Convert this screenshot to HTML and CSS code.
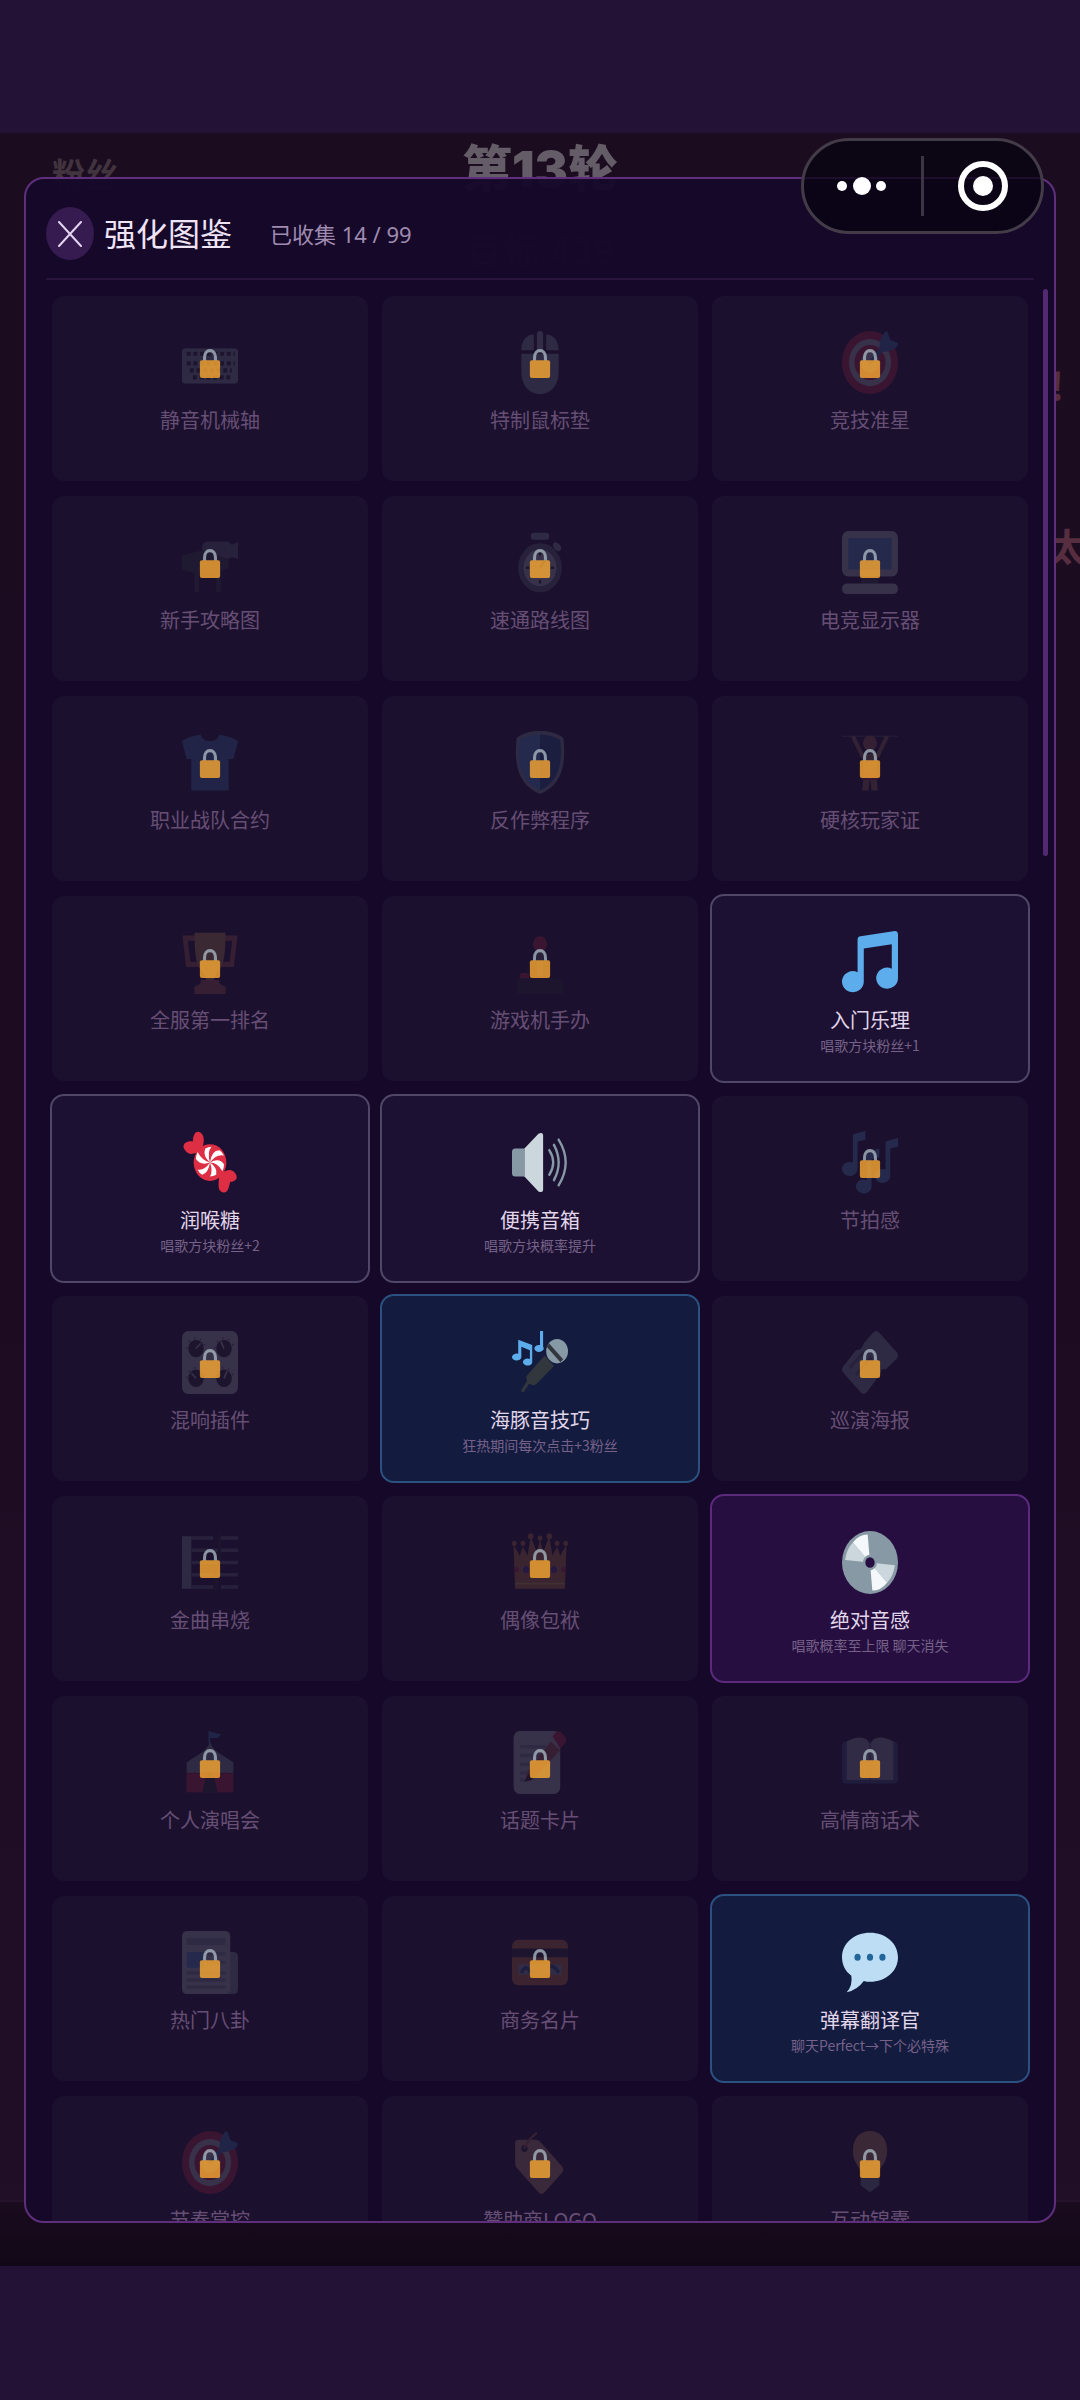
FILE: index.html
```html
<!DOCTYPE html>
<html lang="zh-CN">
<head>
  <meta charset="utf-8">
  <title>强化图鉴</title>
  <meta name="viewport" content="width=device-width, initial-scale=1.0">
  <link rel="stylesheet" href="styles.css">
</head>
<body>
  <!-- 图标库 -->
  <svg class="sprite" aria-hidden="true">
    <symbol id="lock" viewBox="0 0 36 36" preserveAspectRatio="none">
      <path fill="none" stroke="#AAB8C2" stroke-width="4" d="M11 17V10.500C11 5.500 14 2 18 2s7 3.500 7 8.500V17"/>
      <rect x="5" y="14" width="26" height="22" rx="2.500" fill="#FFAC33"/>
    </symbol>
    <symbol id="keyboard" viewBox="0 0 36 36" preserveAspectRatio="none">
      <rect y="10" width="36" height="20" rx="2" fill="#99AAB5"/>
      <path fill="none" stroke="#292F33" stroke-width="2.400" stroke-dasharray="2.600 1.700" d="M3 13h31M3 18.500h31M5 22.500h27M7 26.500h24"/>
    </symbol>
    <symbol id="mouse" viewBox="0 0 36 36" preserveAspectRatio="none">
      <path fill="#99AAB5" d="M6 13h24v10c0 8-5 13-12 13S6 31 6 23zM6 11C6 6 9 2 14 2v9zM30 11c0-5-3-9-8-9v9z"/>
      <rect x="16" width="4" height="12" rx="2" fill="#AAB8C2"/>
    </symbol>
    <symbol id="target" viewBox="0 0 36 36" preserveAspectRatio="none">
      <circle cx="18" cy="18" r="18" fill="#DD2E44"/>
      <circle cx="18" cy="18" r="13.500" fill="#CCD6DD"/>
      <circle cx="18" cy="18" r="10" fill="#DD2E44"/>
      <circle cx="18" cy="18" r="6" fill="#CCD6DD"/>
      <path fill="#3B88C3" d="M24 10c0-5 3-10 5-10l2 5 5 2c0 3-5 5-10 5l-8 7-1-1z"/>
    </symbol>
    <symbol id="mailbox" viewBox="0 0 36 36" preserveAspectRatio="none">
      <path fill="#66757F" d="M13 9c0-2 2-3 4-3h13l2 2 4-2v10l-4-1-2 1H13z"/>
      <path fill="#3A4248" d="M0 14l13-3 17 5v5l-5 2v12h-3V23H11v12H8V24l-8-2z"/>
    </symbol>
    <symbol id="stopwatch" viewBox="0 0 36 36" preserveAspectRatio="none">
      <rect x="12" y="1" width="12" height="4" rx="2" fill="#99AAB5"/>
      <ellipse cx="29" cy="9" rx="3" ry="2" fill="#99AAB5" transform="rotate(45 29 9)"/>
      <circle cx="18" cy="21" r="14" fill="#66757F"/>
      <circle cx="18" cy="21" r="10.500" fill="#CCD6DD"/>
      <path stroke="#292F33" stroke-width="1.500" d="M18 12v2M18 28v2M9 21h2M25 21h2M18 21l4-5"/>
    </symbol>
    <symbol id="monitor" viewBox="0 0 36 36" preserveAspectRatio="none">
      <path fill="#3B4248" d="M13 26h10l1 4H12z"/>
      <rect width="36" height="26" rx="4" fill="#CCD6DD"/>
      <rect y="30" width="36" height="6" rx="3" fill="#CCD6DD"/>
      <rect x="4" y="4" width="28" height="18" fill="#5DADEC"/>
    </symbol>
    <symbol id="shirt" viewBox="0 0 36 36" preserveAspectRatio="none">
      <path fill="#4289C1" d="M12 2c1 5 11 5 12 0 5 1 10 2 12 4l-3 10h-3V34H6V16H3L0 6c2-2 7-3 12-4z"/>
    </symbol>
    <symbol id="shield" viewBox="0 0 36 36" preserveAspectRatio="none">
      <path fill="#99AAB5" d="M18 0c5 0 11 1 15 4 2 15-1 27-15 32C4 31 1 19 3 4 7 1 13 0 18 0z"/>
      <path fill="#226699" d="M18 2c4 0 9 1 13 3 2 13-1 24-13 29z"/>
      <path fill="#55ACEE" d="M18 2C14 2 9 3 5 5 3 18 6 29 18 34z"/>
    </symbol>
    <symbol id="lifter" viewBox="0 0 36 36" preserveAspectRatio="none">
      <path fill="none" stroke="#66757F" stroke-width="0.500" d="M0 3h36"/>
      <path fill="none" stroke="#AF7E57" stroke-width="2.500" d="M7 3l6 11 4 3M29 3l-6 11-4 3"/>
      <circle cx="18" cy="7" r="4.500" fill="#BF6952"/>
      <path fill="#AF7E57" d="M13 13h10l-1 12 1 9h-4l-1-8-1 8h-4l1-9z"/>
      <path fill="#DD2E44" d="M13 22h10v6h-4l-1-2-1 2h-4z"/>
    </symbol>
    <symbol id="trophy" viewBox="0 0 36 36" preserveAspectRatio="none">
      <path fill="none" stroke="#C1694F" stroke-width="3" d="M9 4H2l2 15h7M27 4h7l-2 15h-7"/>
      <path fill="#DDA050" d="M8 1h20c0 12-1 20-6 23l-2 5h-4l-2-5C9 21 8 13 8 1z"/>
      <path fill="#C1694F" d="M12 28h12v2l4 2v4H8v-4l4-2z"/>
    </symbol>
    <symbol id="joystick" viewBox="0 0 36 36" preserveAspectRatio="none">
      <path fill="#66757F" d="M16 10h4v16h-4z"/>
      <circle cx="18" cy="7.500" r="4.500" fill="#DD2E44"/>
      <rect x="5" y="24" width="6" height="4" rx="2" fill="#DD2E44"/>
      <path fill="#292F33" d="M5 27h26l2 2v7H3v-7z"/>
    </symbol>
    <symbol id="note" viewBox="0 0 36 36" preserveAspectRatio="none">
      <path fill="#5DADEC" d="M34 0L12 3q-2 0-2 2v18.500A7 6 0 1 0 14 29V10l18-2.500v14A7 6 0 1 0 36 27V2q0-2-2-2z"/>
    </symbol>
    <symbol id="candy" viewBox="0 0 36 36" preserveAspectRatio="none">
      <path fill="#DD2E44" d="M12 12c-3 0-7 3-10-1-3-3 1-6 5-5 0-4 2-7 5-5s2 6 1 9zM24 24c3 0 5-3 9-1 4 3 2 6-2 6-1 4-2 7-5 6-4-1-2-7-2-11z"/>
      <circle cx="18" cy="18" r="10.500" fill="#DD2E44"/>
      <path fill="#FFF" d="M18 18q-5-4-3-8 2-1 4-1-3 3-1 9q1-7 6-7 2 1 3 3-5-1-9 4q6-3 9 1 0 2-1 4-3-5-8-5q5 3 4 7-2 1-4 1 2-3 0-8q-1 6-5 7-2-1-3-3 4 1 8-4q-6 2-9-2 0-2 1-4 3 5 8 6"/>
    </symbol>
    <symbol id="speaker" viewBox="0 0 36 36" preserveAspectRatio="none">
      <path fill="#8899A6" d="M8 10H2q-2 0-2 2v12q0 2 2 2h6z"/>
      <path fill="#CCD6DD" d="M8 10L17 1.500q3-1 3 1v31q0 2-3 1L8 26z"/>
      <path fill="none" stroke="#8899A6" stroke-width="1.500" stroke-linecap="round" d="M24 11q5 7 0 14M27 8q6 10 0 20M30 5q9 13 0 26"/>
    </symbol>
    <symbol id="notes" viewBox="0 0 36 36" preserveAspectRatio="none">
      <path fill="#5DADEC" d="M7 2l8-2v5l-5 1v16a5 4 0 1 1-3-4zM28 6l8-2v5l-5 1v16a5 4 0 1 1-3-4zM16 12l8-2v5l-5 1v16a5 4 0 1 1-3-4z"/>
    </symbol>
    <symbol id="knobs" viewBox="0 0 36 36" preserveAspectRatio="none">
      <rect width="36" height="36" rx="4" fill="#CCD6DD"/>
      <g fill="#292F33"><circle cx="9" cy="10" r="5"/><circle cx="27" cy="10" r="5"/><circle cx="9" cy="27" r="5"/><circle cx="27" cy="27" r="5"/></g>
      <path fill="none" stroke="#CCD6DD" d="M9 10l3-3M27 10l-2-4M9 27l-3-3M27 27l2-4"/>
      <path fill="none" stroke="#66757F" stroke-dasharray="1 3" d="M3 10a6 6 0 0 1 12 0M21 10a6 6 0 0 1 12 0M3 27a6 6 0 0 1 12 0M21 27a6 6 0 0 1 12 0"/>
    </symbol>
    <symbol id="mic" viewBox="0 0 36 36" preserveAspectRatio="none">
      <path fill="none" stroke="#31373D" stroke-width="2" stroke-linecap="round" d="M7 34l5-7"/>
      <path fill="#31373D" d="M21 14l6 6-11 10q-2 2-5 0-3-3-1-5z"/>
      <circle cx="29" cy="11.500" r="7" fill="#8899A6"/>
      <path stroke="#31373D" stroke-width="2.500" d="M23 8l9 9"/>
      <path fill="#5DADEC" d="M4 5l9 3v10a3 2 0 1 1-1.500-2V11L6 9v6a3 2 0 1 1-2-2zM18 0h2v9a3 2 0 1 1-2-1z"/>
    </symbol>
    <symbol id="ticket" viewBox="0 0 36 36" preserveAspectRatio="none">
      <path fill="#99AAB5" d="M20 1q2-2 4 0l11 11q2 2 0 4l-7 6q-3-1-3 2l-9 11q-2 2-4 0L1 24q-2-2 0-4l8-9q4 0 5-4z"/>
      <path stroke="#66757F" stroke-width="2" d="M5 21l9-9M9 25l10-10"/>
    </symbol>
    <symbol id="score" viewBox="0 0 36 36" preserveAspectRatio="none">
      <path fill="#99AAB5" d="M0 3h6v30H0z"/>
      <path fill="none" stroke="#66757F" stroke-width="2" d="M6 4h14M25 4h11M6 11h30M6 18h30M6 25h30M6 32h14M25 32h11"/>
      <path fill="none" stroke="#292F33" stroke-width="2" d="M21 34q2-4 0-8l3-10V2"/>
    </symbol>
    <symbol id="crown" viewBox="0 0 36 36" preserveAspectRatio="none">
      <path fill="#D98A3A" d="M2 33L1 8l4 6 2-5 3 5 2-11 4 9 2-7 2 7 4-9 2 11 3-5 2 5 4-6-1 25z"/>
      <g fill="#D98A3A"><circle cx="1.500" cy="7" r="1.500"/><circle cx="7" cy="7" r="1.500"/><circle cx="12" cy="3" r="1.700"/><circle cx="18" cy="4" r="1.500"/><circle cx="24" cy="3" r="1.700"/><circle cx="29" cy="7" r="1.500"/><circle cx="34.500" cy="7" r="1.500"/></g>
      <path stroke="#FFCC4D" stroke-width="1" d="M2 30h32"/>
      <g fill="#5C3DA8"><circle cx="9" cy="22" r="2"/><circle cx="27" cy="22" r="2"/></g>
      <g fill="#DD2E44"><circle cx="3" cy="22" r="1.500"/><circle cx="33" cy="22" r="1.500"/></g>
    </symbol>
    <symbol id="tent" viewBox="0 0 36 36" preserveAspectRatio="none">
      <path fill="#3B88C3" d="M17 0l8 2-2 2h-5v3h-1z"/>
      <path fill="#99AAB5" d="M18 6c2 6 9 8 15 12v6H3v-6c6-4 13-6 15-12z"/>
      <path fill="#DD2E44" d="M3 23q3 3 5 0 3 3 5 0h10q3 3 5 0 3 3 5 0v12H3z"/>
      <path fill="#292F33" d="M16 24h4l3 11H13z"/>
    </symbol>
    <symbol id="memo" viewBox="0 0 36 36" preserveAspectRatio="none">
      <rect x="1" width="30" height="36" rx="4" fill="#CCD6DD"/>
      <path stroke="#99AAB5" stroke-width="2" d="M5 9h17M5 14h14M5 19h11M5 24h6M5 28h5"/>
      <path fill="#C1694F" d="M25 6l6 5-18 17-5 1 2-6z"/>
      <path fill="#DD2E44" d="M26 3l3-3q5 1 6 6l-4 4z"/>
      <path fill="#292F33" d="M11 24l-3 5 5-1z"/>
    </symbol>
    <symbol id="book" viewBox="0 0 36 36" preserveAspectRatio="none">
      <path fill="#3E5A80" d="M0 9q0-3 3-3h30q3 0 3 3v18q0 3-3 3H3q-3 0-3-3z"/>
      <path fill="#AAB4BE" d="M3 6q8-4 13-1l2 3 2-3q5-3 13 1v22H3z"/>
      <path stroke="#66757F" d="M18 8v20"/>
    </symbol>
    <symbol id="news" viewBox="0 0 36 36" preserveAspectRatio="none">
      <path fill="#99AAB5" d="M26 12h7q3 0 3 3v18q0 3-3 3h-7z"/>
      <rect width="31" height="36" rx="3" fill="#CCD6DD"/>
      <path fill="#99AAB5" d="M3 4h25v4H3zM16 12h12v2H16zM16 17h12v2H16zM3 23h25v2H3zM3 27h25v2H3zM3 31h25v2H3z"/>
      <path fill="#5DADEC" d="M3 12h11v9H3z"/>
    </symbol>
    <symbol id="card" viewBox="0 0 36 36" preserveAspectRatio="none">
      <rect y="5" width="36" height="26" rx="4" fill="#E0853A"/>
      <path fill="#292F33" d="M0 10h36v5H0z"/>
      <path fill="#AAB4BE" d="M4 19h28v6H4z"/>
      <path fill="none" stroke="#269" stroke-width="2" d="M6 24q3-6 6 0M24 20q4 0 6 4"/>
    </symbol>
    <symbol id="disc" viewBox="0 0 36 36" preserveAspectRatio="none">
      <circle cx="18" cy="18" r="18" fill="#8899A6"/>
      <path fill="#CCD6DD" d="M18 18L2 16.500Q3 10 7 6.500zM18 18l16 1.500q-1 6.500-5 10z"/>
      <path fill="#F5F8FA" d="M18 18L7 6.500Q11 2 16.500 2zM18 18l11 11.500q-4 4.500-9.500 4.500z"/>
      <circle cx="18" cy="18" r="4.500" fill="#8899A6"/>
      <circle cx="18" cy="18" r="3" fill="#260f40"/>
    </symbol>
    <symbol id="bubble" viewBox="0 0 36 36" preserveAspectRatio="none">
      <path fill="#BDDDF4" d="M18 1c10 0 18 6 18 14s-8 14-18 14q-2 0-4-.5-4 5-11 6.500 4-4 3-9.500C2 23 0 19 0 15 0 7 8 1 18 1z"/>
      <g fill="#269"><circle cx="10" cy="15" r="2"/><circle cx="18" cy="15" r="2"/><circle cx="26" cy="15" r="2"/></g>
    </symbol>
    <symbol id="tag" viewBox="0 0 36 36" preserveAspectRatio="none">
      <path fill="#D99E82" d="M2 7q0-2 2-2h11q2 0 3 1l14 14q2 2 0 4L21 35q-2 2-4 0L3 21q-1-1-1-3z"/>
      <circle cx="8" cy="10" r="2" fill="#292F33"/>
      <path fill="none" stroke="#C1694F" stroke-width="1.500" d="M8 10q1-4 8-9"/>
    </symbol>
    <symbol id="bulb" viewBox="0 0 36 36" preserveAspectRatio="none">
      <path fill="#D9A066" d="M29 11c0 9-6 9-6 16H13c0-7-6-7-6-16C7 4 12 0 18 0s11 4 11 11z"/>
      <path fill="#8899A6" d="M12 27h12v4l-6 4-6-4z"/>
    </symbol>
  </svg>

  <main class="game">
    <!-- 游戏画面（被图鉴遮住） -->
    <div class="hud">
      <span class="hud-fans">粉丝</span>
      <div class="hud-round">
        <strong>第13轮</strong>
        <span>目标:439</span>
      </div>
    </div>
    <span class="danmu danmu-1">!</span>
    <span class="danmu danmu-2">太</span>
    <div class="stage-floor"></div>

    <!-- 强化图鉴弹窗 -->
    <section class="panel">
      <header class="panel-head">
        <button class="close" type="button" aria-label="关闭">
          <svg viewBox="0 0 24 26"><path d="M1 1l22 24M23 1L1 25"/></svg>
        </button>
        <h1>强化图鉴</h1>
        <p>已收集 14 / 99</p>
      </header>

      <ul class="grid">
        <li class="item locked"><div class="icon"><svg><use href="#keyboard"/></svg><svg class="lock"><use href="#lock"/></svg></div><h2>静音机械轴</h2></li>
        <li class="item locked"><div class="icon"><svg><use href="#mouse"/></svg><svg class="lock"><use href="#lock"/></svg></div><h2>特制鼠标垫</h2></li>
        <li class="item locked"><div class="icon"><svg><use href="#target"/></svg><svg class="lock"><use href="#lock"/></svg></div><h2>竞技准星</h2></li>

        <li class="item locked"><div class="icon"><svg><use href="#mailbox"/></svg><svg class="lock"><use href="#lock"/></svg></div><h2>新手攻略图</h2></li>
        <li class="item locked"><div class="icon"><svg><use href="#stopwatch"/></svg><svg class="lock"><use href="#lock"/></svg></div><h2>速通路线图</h2></li>
        <li class="item locked"><div class="icon"><svg><use href="#monitor"/></svg><svg class="lock"><use href="#lock"/></svg></div><h2>电竞显示器</h2></li>

        <li class="item locked"><div class="icon"><svg><use href="#shirt"/></svg><svg class="lock"><use href="#lock"/></svg></div><h2>职业战队合约</h2></li>
        <li class="item locked"><div class="icon"><svg><use href="#shield"/></svg><svg class="lock"><use href="#lock"/></svg></div><h2>反作弊程序</h2></li>
        <li class="item locked"><div class="icon"><svg><use href="#lifter"/></svg><svg class="lock"><use href="#lock"/></svg></div><h2>硬核玩家证</h2></li>

        <li class="item locked"><div class="icon"><svg><use href="#trophy"/></svg><svg class="lock"><use href="#lock"/></svg></div><h2>全服第一排名</h2></li>
        <li class="item locked"><div class="icon"><svg><use href="#joystick"/></svg><svg class="lock"><use href="#lock"/></svg></div><h2>游戏机手办</h2></li>
        <li class="item common"><div class="icon"><svg><use href="#note"/></svg></div><h2>入门乐理</h2><p>唱歌方块粉丝+1</p></li>

        <li class="item common"><div class="icon"><svg><use href="#candy"/></svg></div><h2>润喉糖</h2><p>唱歌方块粉丝+2</p></li>
        <li class="item common"><div class="icon"><svg><use href="#speaker"/></svg></div><h2>便携音箱</h2><p>唱歌方块概率提升</p></li>
        <li class="item locked"><div class="icon"><svg><use href="#notes"/></svg><svg class="lock"><use href="#lock"/></svg></div><h2>节拍感</h2></li>

        <li class="item locked"><div class="icon"><svg><use href="#knobs"/></svg><svg class="lock"><use href="#lock"/></svg></div><h2>混响插件</h2></li>
        <li class="item rare"><div class="icon"><svg><use href="#mic"/></svg></div><h2>海豚音技巧</h2><p>狂热期间每次点击+3粉丝</p></li>
        <li class="item locked"><div class="icon"><svg><use href="#ticket"/></svg><svg class="lock"><use href="#lock"/></svg></div><h2>巡演海报</h2></li>

        <li class="item locked"><div class="icon"><svg><use href="#score"/></svg><svg class="lock"><use href="#lock"/></svg></div><h2>金曲串烧</h2></li>
        <li class="item locked"><div class="icon"><svg><use href="#crown"/></svg><svg class="lock"><use href="#lock"/></svg></div><h2>偶像包袱</h2></li>
        <li class="item epic"><div class="icon"><svg><use href="#disc"/></svg></div><h2>绝对音感</h2><p>唱歌概率至上限 聊天消失</p></li>

        <li class="item locked"><div class="icon"><svg><use href="#tent"/></svg><svg class="lock"><use href="#lock"/></svg></div><h2>个人演唱会</h2></li>
        <li class="item locked"><div class="icon"><svg><use href="#memo"/></svg><svg class="lock"><use href="#lock"/></svg></div><h2>话题卡片</h2></li>
        <li class="item locked"><div class="icon"><svg><use href="#book"/></svg><svg class="lock"><use href="#lock"/></svg></div><h2>高情商话术</h2></li>

        <li class="item locked"><div class="icon"><svg><use href="#news"/></svg><svg class="lock"><use href="#lock"/></svg></div><h2>热门八卦</h2></li>
        <li class="item locked"><div class="icon"><svg><use href="#card"/></svg><svg class="lock"><use href="#lock"/></svg></div><h2>商务名片</h2></li>
        <li class="item rare"><div class="icon"><svg><use href="#bubble"/></svg></div><h2>弹幕翻译官</h2><p>聊天Perfect→下个必特殊</p></li>

        <li class="item locked"><div class="icon"><svg><use href="#target"/></svg><svg class="lock"><use href="#lock"/></svg></div><h2>节奏掌控</h2></li>
        <li class="item locked"><div class="icon"><svg><use href="#tag"/></svg><svg class="lock"><use href="#lock"/></svg></div><h2>赞助商LOGO</h2></li>
        <li class="item locked"><div class="icon"><svg><use href="#bulb"/></svg><svg class="lock"><use href="#lock"/></svg></div><h2>互动锦囊</h2></li>
      </ul>
      <div class="scroll-thumb"></div>
    </section>

    <!-- 小程序胶囊按钮 -->
    <div class="capsule">
      <button type="button" aria-label="更多">
        <svg width="52" height="52" viewBox="0 0 52 52" fill="#fff"><circle cx="5" cy="26" r="5"/><circle cx="25" cy="26" r="9"/><circle cx="44" cy="26" r="5"/></svg>
      </button>
      <button type="button" aria-label="退出">
        <svg width="52" height="52" viewBox="0 0 52 52"><circle cx="26" cy="26" r="22" fill="none" stroke="#fff" stroke-width="6"/><circle cx="26" cy="26" r="10" fill="#fff"/></svg>
      </button>
    </div>
  </main>
</body>
</html>
```

FILE: styles.css
```css
* { margin: 0; padding: 0; box-sizing: border-box; }
body {
  font-family: "Noto Sans CJK SC", "Noto Sans", sans-serif;
  background: #231236;
  height: 100vh;
  padding: 133px 0 134px;
  display: flex;
  flex-direction: column;
}
button {
  border: none;
  background: none;
  font: inherit;
  cursor: pointer;
}
.sprite {
  position: absolute;
  width: 0;
  height: 0;
}

/* 背景里的游戏画面 */
.game {
  position: relative;
  flex: 1;
  min-height: 0;
  overflow: hidden;
  display: flex;
  flex-direction: column;
  background: linear-gradient(#1b0d1f, #1d0b22 50%, #200f27);
}
.hud {
  flex: 1;
  display: grid;
  grid-template-columns: 1fr auto 1fr;
  align-items: start;
  padding: 0 52px;
}
.hud-fans {
  padding-top: 16px;
  font-size: 33px;
  line-height: 48px;
  font-weight: 700;
  color: #41343f;
}
.hud-round {
  display: flex;
  flex-direction: column;
  align-items: center;
}
.hud-round strong {
  font-family: Inter, "Noto Sans CJK SC", sans-serif;
  font-size: 50px;
  line-height: 72px;
  font-weight: 900;
  color: #645c67;
}
.hud-round span {
  margin-top: 20px;
  font-size: 36px;
  line-height: 48px;
  font-weight: 700;
  color: #3a1c30;
}
.danmu {
  position: absolute;
  font-size: 38px;
  line-height: 48px;
  font-weight: 700;
  color: #572e40;
}
.danmu-1 { right: 16px; top: 228px; }
.danmu-2 { right: -6px; top: 388px; }
.stage-floor {
  height: 66px;
  border-top: 2px solid #24122a;
  background: linear-gradient(#1a0b1e, #110817);
}

/* 图鉴弹窗 */
.panel {
  position: absolute;
  inset: 44px 24px 43px;
  border: 2px solid #5f2f7d;
  border-radius: 20px;
  background: rgba(21, 8, 42, 0.96);
  overflow: hidden;
  display: flex;
  flex-direction: column;
}
.panel-head {
  display: flex;
  align-items: center;
  height: 101px;
  margin: 0 20px;
  padding-top: 10px;
  border-bottom: 2px solid #28143d;
}
.close {
  width: 48px;
  height: 53px;
  border-radius: 50%;
  background: #351b50;
  display: flex;
  align-items: center;
  justify-content: center;
}
.close svg {
  width: 24px;
  height: 26px;
  fill: none;
  stroke: #e2d4ee;
  stroke-width: 2;
  stroke-linecap: round;
}
.panel-head h1 {
  margin-left: 10px;
  padding-bottom: 4px;
  font-size: 32px;
  line-height: 40px;
  font-weight: 400;
  color: #efe3f6;
}
.panel-head p {
  margin-left: 38px;
  font-family: "Noto Sans", "Noto Sans CJK SC", sans-serif;
  font-size: 22px;
  line-height: 32px;
  color: #a08bb0;
}

.grid {
  flex: 1;
  min-height: 0;
  overflow: hidden;
  list-style: none;
  display: grid;
  grid-template-columns: repeat(3, 1fr);
  grid-auto-rows: 189px;
  gap: 11px 10px;
  padding: 14px 24px 0;
}
.item {
  display: flex;
  flex-direction: column;
  align-items: center;
  padding-top: 35px;
  border: 2px solid transparent;
  border-radius: 14px;
  background: #1b112e;
  background-clip: padding-box;
}
.item h2 {
  margin-top: 12px;
  font-size: 20px;
  line-height: 28px;
  font-weight: 400;
  color: #e2d6ea;
}
.item p {
  font-size: 14px;
  line-height: 22px;
  color: #766189;
}
.icon {
  position: relative;
  width: 56px;
  height: 63px;
}
.icon svg {
  display: block;
  width: 100%;
  height: 100%;
}
.icon .lock {
  position: absolute;
  left: 14px;
  top: 18px;
  width: 28px;
  height: 29px;
  opacity: 0.78;
}
.locked .icon svg:first-child { opacity: 0.16; }
.locked h2 { color: #674e75; }
.common { background: #1c1132; border-color: #4f4668; }
.rare { background: #131b3f; border-color: #2b5180; }
.epic { background: #260f40; border-color: #5b2a7d; }

.scroll-thumb {
  position: absolute;
  top: 110px;
  right: 6px;
  width: 5px;
  height: 567px;
  border-radius: 3px;
  background: #532973;
}

/* 胶囊 */
.capsule {
  position: absolute;
  top: 5px;
  right: 36px;
  width: 243px;
  height: 96px;
  border: 3px solid #433c48;
  border-radius: 48px;
  background: rgba(8, 3, 18, 0.75);
  display: flex;
  align-items: center;
}
.capsule button {
  flex: 1;
  height: 60px;
  display: flex;
  align-items: center;
  justify-content: center;
}
.capsule button + button { border-left: 3px solid #3b3544; }
```
